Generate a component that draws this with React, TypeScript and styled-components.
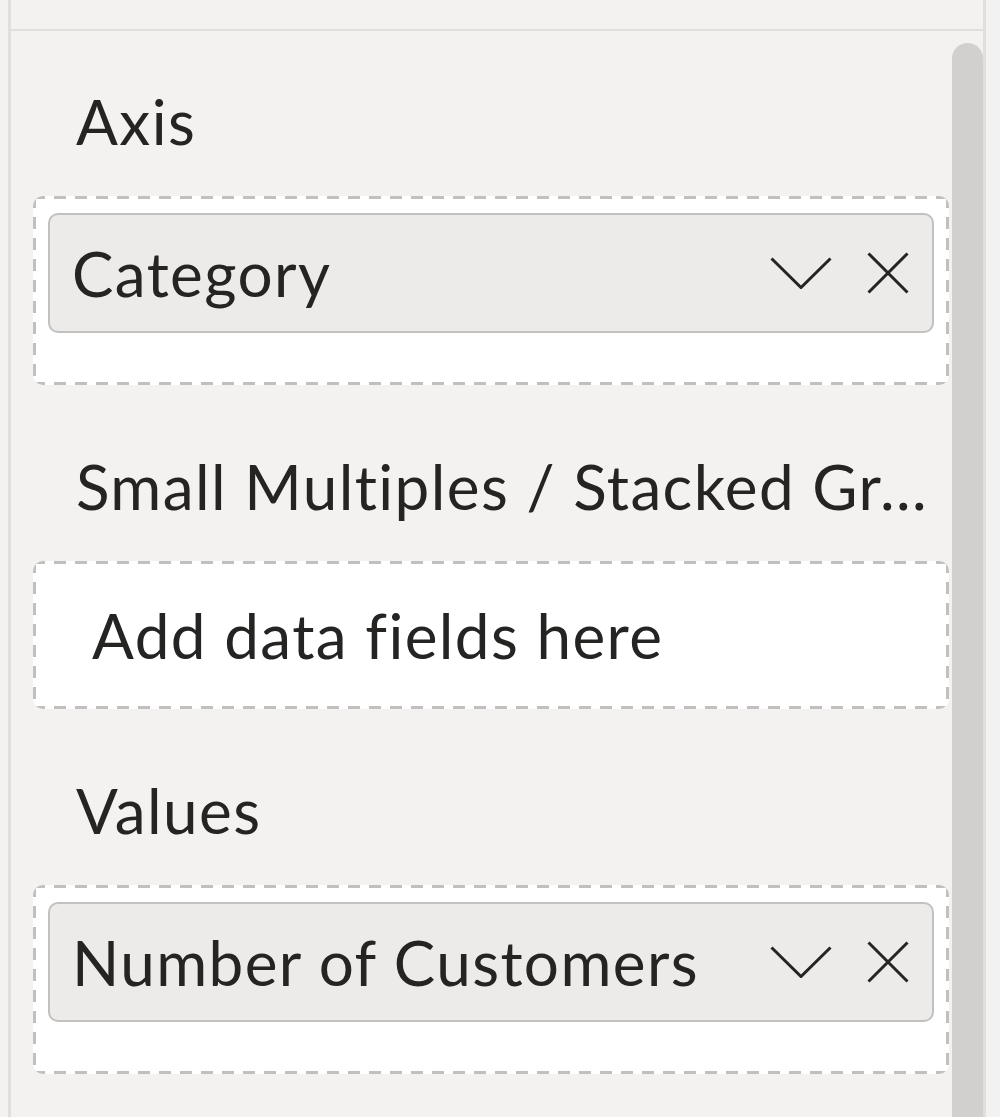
import styled, { createGlobalStyle } from "styled-components";

const GlobalStyle = createGlobalStyle`
  html, body {
    margin: 0;
    padding: 0;
    background: #f3f2f1;
  }
  body {
    font-family: Lato, "Noto Sans", sans-serif;
    color: #252423;
    font-variant-ligatures: none;
  }
`;

const dash = "#c2c0be";

const Page = styled.div`
  width: 1000px;
  height: 1117px;
  overflow: hidden;
  background: #f3f2f1;
  display: flex;
`;

const Pane = styled.div`
  margin-left: 8px;
  width: 972px;
  border-left: 3px solid #e1dfdd;
  border-right: 3px solid #e1dfdd;
  display: flex;
  flex-direction: column;
`;

const TopStrip = styled.div`
  height: 29px;
  flex-shrink: 0;
  border-bottom: 2px solid #e1dfdd;
`;

const Body = styled.div`
  flex: 1;
  display: flex;
  min-height: 0;
`;

const Fields = styled.div`
  flex: 1;
  padding: 0 1px 0 22px;
`;

const Scrollbar = styled.div`
  width: 33px;
  padding-top: 12px;
  display: flex;
  justify-content: flex-end;
`;

const Thumb = styled.div`
  width: 31px;
  background: #d2d0ce;
  border-radius: 16px 16px 0 0;
`;

const Section = styled.section`
  padding-top: 50px;
  & + & {
    padding-top: 61px;
  }
`;

const Label = styled.div`
  font-size: 62px;
  letter-spacing: 1.4px;
  line-height: 80px;
  height: 80px;
  padding-left: 43px;
  margin-bottom: 35px;
  white-space: nowrap;
  overflow: hidden;
`;

// dashed outline drawn with gradients so the dash length matches (12px dash, 9px gap)
const Well = styled.div<{ $empty?: boolean }>`
  box-sizing: border-box;
  border-radius: 10px;
  background:
    repeating-linear-gradient(90deg, ${dash} 0 12px, transparent 12px 21px) left top / 100% 3px no-repeat,
    repeating-linear-gradient(90deg, ${dash} 0 12px, transparent 12px 21px) left bottom / 100% 3px no-repeat,
    repeating-linear-gradient(180deg, ${dash} 0 12px, transparent 12px 21px) left top / 3px 100% no-repeat,
    repeating-linear-gradient(180deg, ${dash} 0 12px, transparent 12px 21px) right top / 3px 100% no-repeat,
    #ffffff;
  ${(p) =>
    p.$empty
      ? `
    height: 148px;
    display: flex;
    align-items: center;
    padding-left: 59px;
  `
      : `
    padding: 17px 15px 52px;
  `}
`;

const Placeholder = styled.span`
  font-size: 62px;
  letter-spacing: 1.4px;
  white-space: nowrap;
`;

const Pill = styled.div`
  box-sizing: border-box;
  height: 120px;
  border: 2px solid #c3c1bf;
  border-radius: 10px;
  background: #edebe9;
  display: flex;
  align-items: center;
  padding: 0 23px 0 22px;
`;

const PillName = styled.span`
  flex: 1;
  font-size: 62px;
  letter-spacing: 1.4px;
  white-space: nowrap;
`;

const IconBox = styled.span`
  display: flex;
  align-items: center;
  color: #252423;
  & + & {
    margin-left: 35px;
  }
`;

const Chevron = () => (
  <svg width="62" height="32" viewBox="0 0 62 32" fill="none">
    <path d="M1.5 1.5 L31 30.5 L60.5 1.5" stroke="currentColor" strokeWidth="3" />
  </svg>
);

const Cross = () => (
  <svg width="42" height="42" viewBox="0 0 42 42" fill="none">
    <path d="M1.5 1.5 L40.5 40.5 M40.5 1.5 L1.5 40.5" stroke="currentColor" strokeWidth="3" />
  </svg>
);

function FieldPill({ name }: { name: string }) {
  return (
    <Pill>
      <PillName>{name}</PillName>
      <IconBox>
        <Chevron />
      </IconBox>
      <IconBox>
        <Cross />
      </IconBox>
    </Pill>
  );
}

export default function App() {
  return (
    <Page>
      <GlobalStyle />
      <Pane>
        <TopStrip />
        <Body>
          <Fields>
            <Section>
              <Label>Axis</Label>
              <Well>
                <FieldPill name="Category" />
              </Well>
            </Section>
            <Section>
              <Label>Small Multiples / Stacked Gr...</Label>
              <Well $empty>
                <Placeholder>Add data fields here</Placeholder>
              </Well>
            </Section>
            <Section>
              <Label>Values</Label>
              <Well>
                <FieldPill name="Number of Customers" />
              </Well>
            </Section>
          </Fields>
          <Scrollbar>
            <Thumb />
          </Scrollbar>
        </Body>
      </Pane>
    </Page>
  );
}
